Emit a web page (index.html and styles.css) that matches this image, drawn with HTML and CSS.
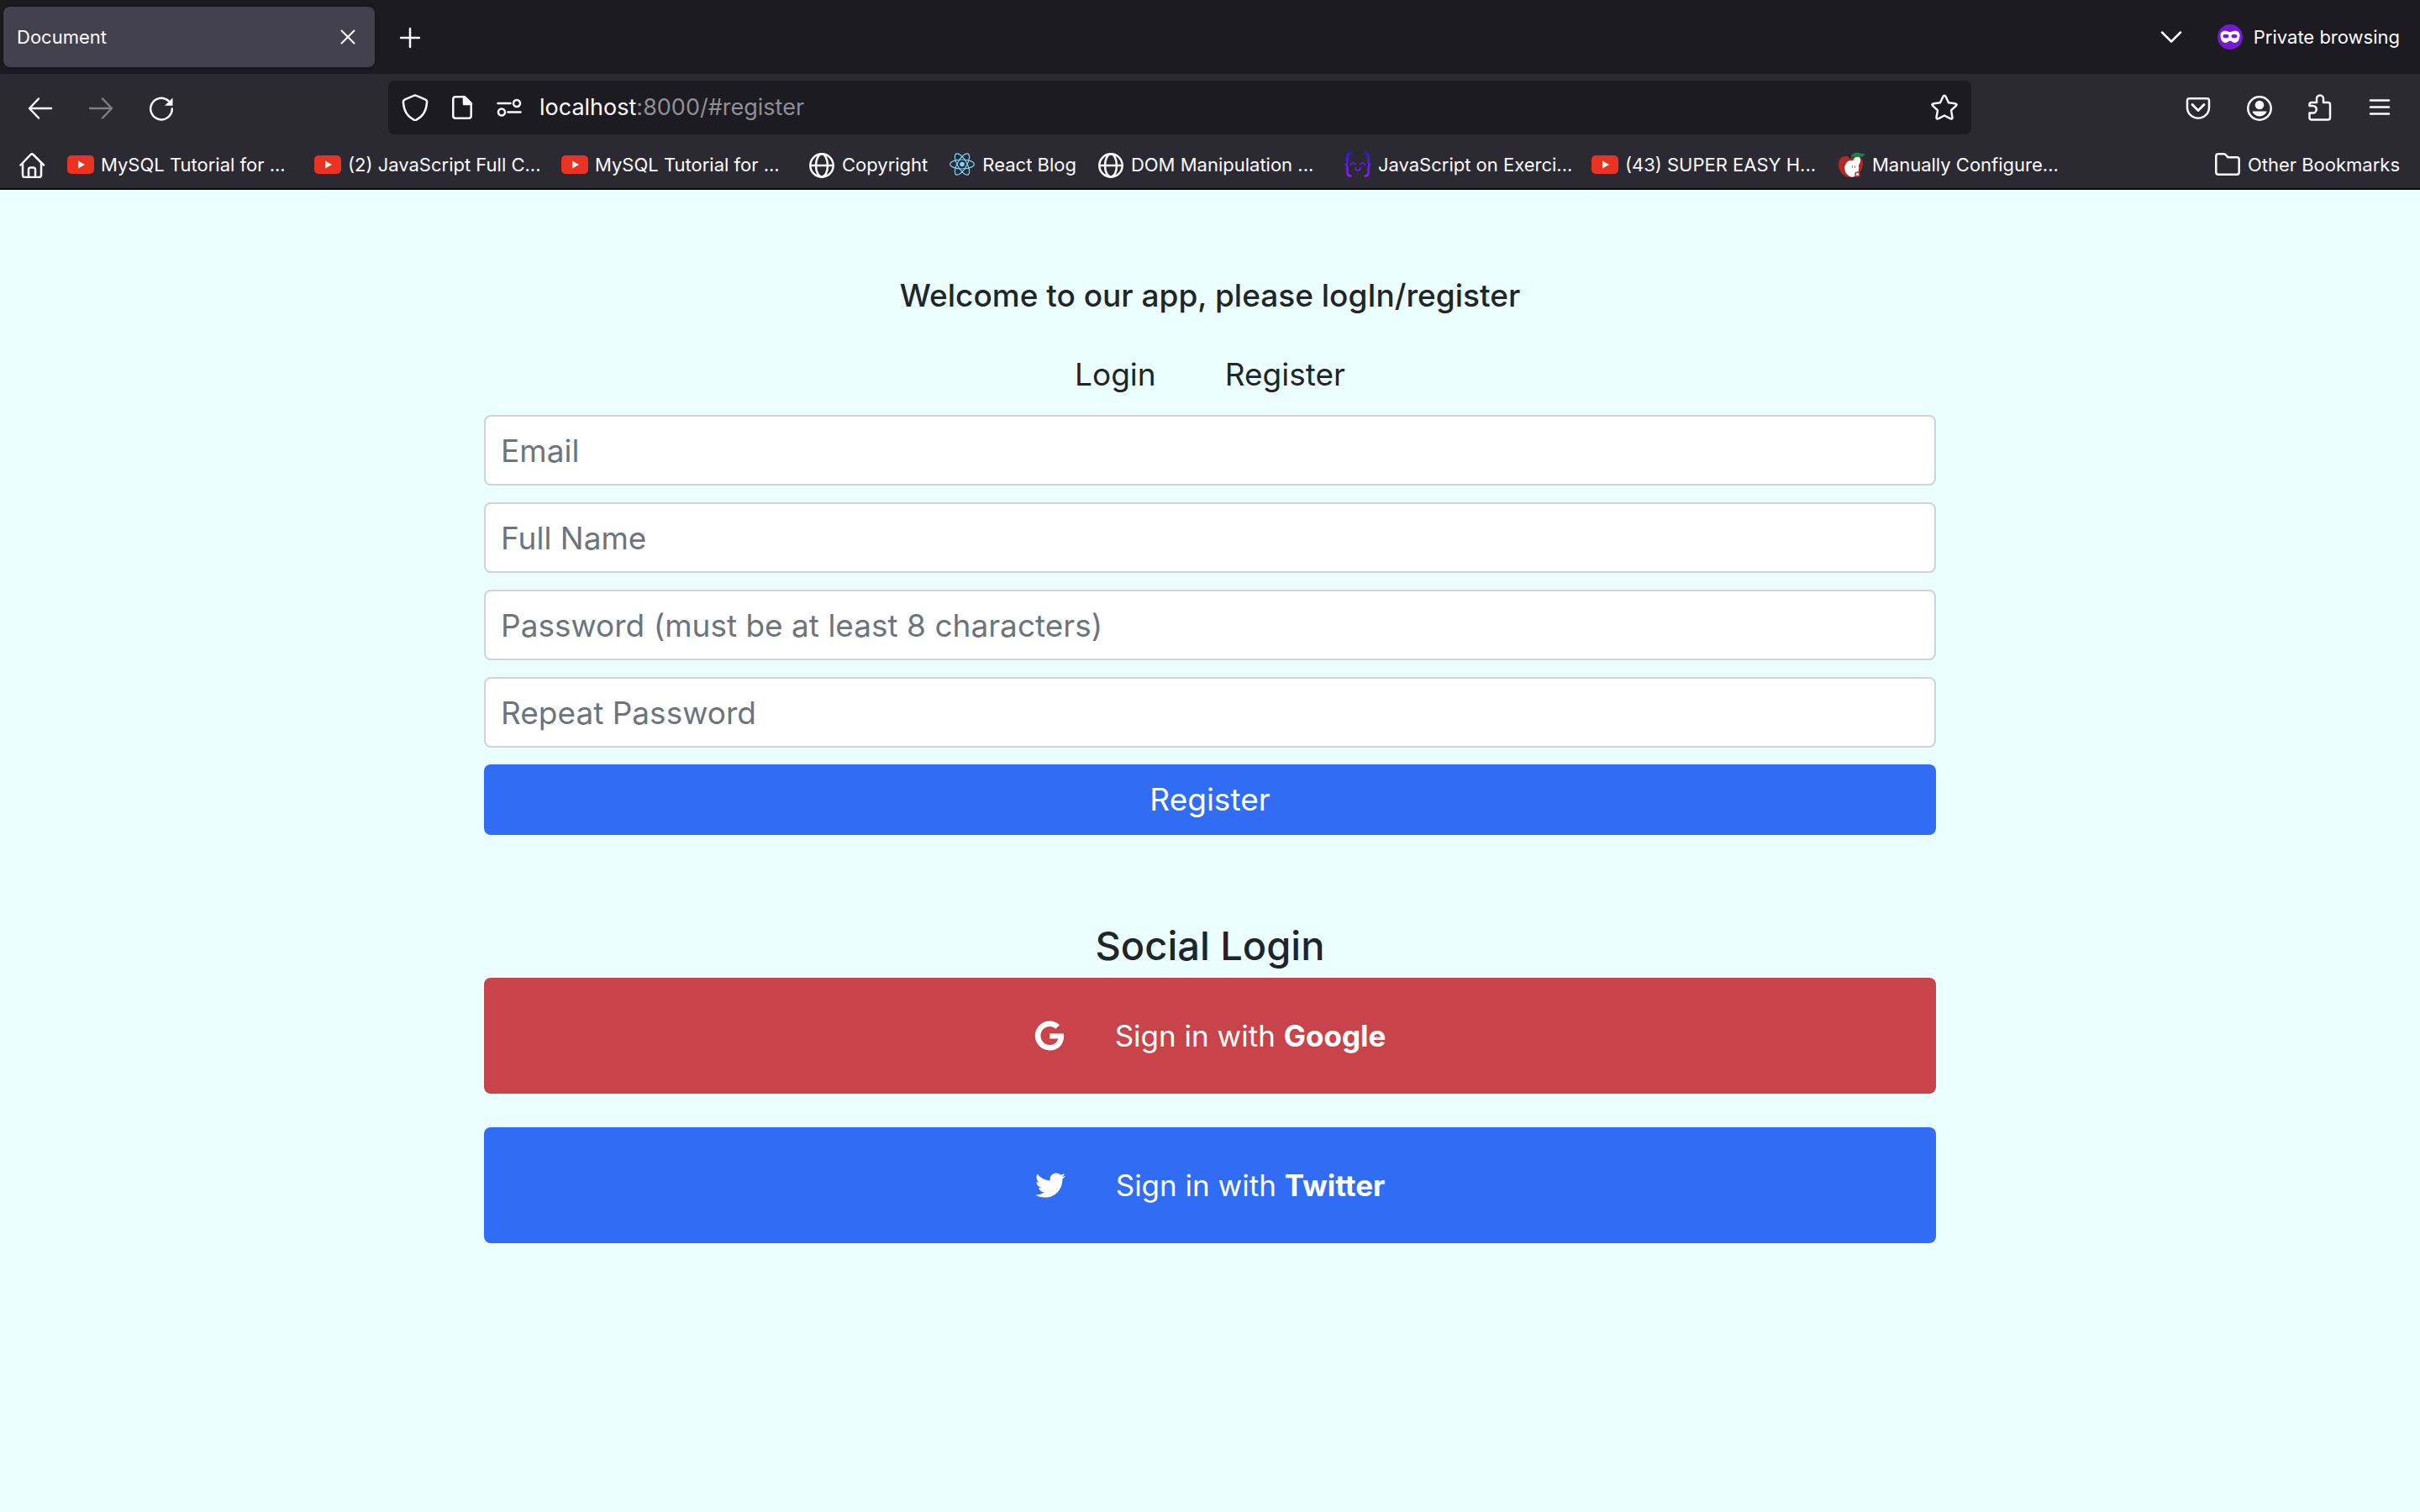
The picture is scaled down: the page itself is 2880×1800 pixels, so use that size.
FILE: index.html
```html
<!DOCTYPE html>
<html lang="en">
<head>
  <meta charset="utf-8">
  <meta name="viewport" content="width=device-width, initial-scale=1">
  <title>Document</title>
  <link rel="stylesheet" href="styles.css">
</head>
<body>
  <svg class="defs" aria-hidden="true">
    <symbol id="youtube" viewBox="0 0 32 32">
      <g stroke="none">
        <rect x="0" y="5" width="32" height="22" rx="5" fill="#ea3323"/>
        <path d="M13 11.500v9l8-4.500z" fill="#fff"/>
      </g>
    </symbol>
    <symbol id="globe" viewBox="0 0 32 32">
      <g fill="none" stroke="currentColor" stroke-width="2.500">
        <circle cx="16" cy="17" r="13.700"/>
        <ellipse cx="16" cy="17" rx="7" ry="13.700"/>
        <path d="M2.500 17h27"/>
      </g>
    </symbol>
  </svg>

  <header class="browser">
    <div class="tabstrip">
      <div class="tab">
        <span class="tab-title">Document</span>
        <button class="tab-close" type="button" aria-label="Close tab">
          <svg class="icon" viewBox="0 0 32 32"><path d="M8.500 8.500l15 15m0-15l-15 15" stroke-width="2"/></svg>
        </button>
      </div>
      <button class="tool" type="button" aria-label="New tab">
        <svg class="icon" viewBox="0 0 32 32"><path d="M16 6v22M5 17h22"/></svg>
      </button>
      <button class="tool list-tabs" type="button" aria-label="List all tabs">
        <svg class="icon" viewBox="0 0 32 32"><path d="M5 10.500l11 11 11-11"/></svg>
      </button>
      <div class="private">
        <svg class="icon" viewBox="0 0 32 32">
          <circle cx="16" cy="16" r="15" fill="#7817d4" stroke="none"/>
          <path d="M4.500 14c0-4 3-5.500 6-5.300 2.500.2 4 1.300 5.500 1.300s3-1.100 5.500-1.300c3-.2 6 1.300 6 5.300 0 5-2.500 9-6.200 9-2.300 0-3.300-2.500-5.300-2.500S13 23 10.700 23C7 23 4.500 19 4.500 14z" fill="#fff" stroke="none"/>
          <ellipse cx="11" cy="15" rx="3.500" ry="2.300" fill="#7817d4" stroke="none"/>
          <ellipse cx="21" cy="15" rx="3.500" ry="2.300" fill="#7817d4" stroke="none"/>
        </svg>
        <span>Private browsing</span>
      </div>
    </div>

    <div class="toolbar">
      <div class="tools">
        <button class="tool" type="button" aria-label="Back">
          <svg class="icon" viewBox="0 0 32 32"><path d="M29 17H3.500M14 5.500L3 17l11 11.500"/></svg>
        </button>
        <button class="tool" type="button" aria-label="Forward" disabled>
          <svg class="icon" viewBox="0 0 32 32"><path d="M3 17h25.500M18 5.500L29 17 18 28.500"/></svg>
        </button>
        <button class="tool" type="button" aria-label="Reload">
          <svg class="icon" viewBox="0 0 32 32"><path d="M24.500 8A12.800 12.800 0 1 0 28.800 17.500"/><path d="M29.500 4.500v9.300h-9.500z" fill="currentColor" stroke="none"/></svg>
        </button>
      </div>
      <div class="urlbar">
        <button class="url-button" type="button" aria-label="Tracking protection">
          <svg class="icon" viewBox="0 0 32 32"><path d="M14.500 1.800q1.500-.7 3 0L28 6.300q2.200.9 2.100 3.200c-.5 9.500-4.500 17-12.600 21.100q-1.500.7-3 0C6.400 26.500 2.400 19 1.900 9.500Q1.800 7.200 4 6.300z"/></svg>
        </button>
        <button class="url-button" type="button" aria-label="Site information">
          <svg class="icon" viewBox="0 0 32 32"><path d="M19 3.300H8Q5.300 3.300 5.300 6v20Q5.300 28.700 8 28.700h16q2.700 0 2.700-2.700V11z"/><path d="M18 3v9h9z" fill="currentColor"/></svg>
        </button>
        <button class="url-button" type="button" aria-label="Permissions">
          <svg class="icon" viewBox="0 0 32 32"><path d="M2.500 11h15M14.500 21.500h15"/><circle cx="25" cy="11" r="4"/><circle cx="7" cy="21.500" r="4"/></svg>
        </button>
        <span class="url" role="textbox" aria-label="Address">localhost<span class="url-rest">:8000/#register</span></span>
        <button class="url-button" type="button" aria-label="Bookmark this page">
          <svg class="icon" viewBox="0 0 32 32"><path d="M14.300 3.200q1.700-3 3.400 0l3.300 7 7.600 1q3.200.6 1 3l-5.600 5.200 1.400 7.800q.4 3.200-2.500 2L16 25.500l-6.900 3.700q-2.900 1.200-2.500-2L8 19.400l-5.600-5.200q-2.200-2.400 1-3l7.600-1z"/></svg>
        </button>
      </div>
      <div class="tools">
        <button class="tool" type="button" aria-label="Save to Pocket">
          <svg class="icon" viewBox="0 0 32 32"><path d="M5.500 5.300h21q2.500 0 2.500 2.500V16a13 12.700 0 0 1-26 0V7.800q0-2.500 2.500-2.500z"/><path d="M9 12.500l7 7 7-7" stroke-width="3"/></svg>
        </button>
        <button class="tool" type="button" aria-label="Account">
          <svg class="icon" viewBox="0 0 32 32"><circle cx="17" cy="17" r="13.700"/><circle cx="17" cy="13" r="5.300" fill="currentColor" stroke="none"/><path d="M9 20.500h16c1.500 0-2 6-8 6s-9.500-6-8-6z" fill="currentColor" stroke="none"/></svg>
        </button>
        <button class="tool" type="button" aria-label="Extensions">
          <svg class="icon" viewBox="0 0 32 32"><path d="M13 10V5.500a4 4 0 0 1 8 0V10h5.500q2.500 0 2.500 2.500V28q0 2.500-2.500 2.500H7Q4.500 30.500 4.500 28v-5.500h4a4 4 0 0 0 0-8.500h-4v-1.500Q4.500 10 7 10z"/></svg>
        </button>
        <button class="tool" type="button" aria-label="Menu">
          <svg class="icon" viewBox="0 0 32 32"><path d="M5 7.500h22M5 15.500h22M5 23.500h22"/></svg>
        </button>
      </div>
    </div>

    <nav class="bookmarks" aria-label="Bookmarks">
      <a class="home" href="#home" aria-label="Home">
        <svg class="icon" viewBox="0 0 32 32"><path d="M2.500 16.500L14.500 4q1.500-1.300 3 0L30 16.500M5 14.500v14Q5 31 7.500 31h17q2.500 0 2.500-2.500v-14M12 30.500V22q0-2.500 2.500-2.500h3q2.500 0 2.500 2.500v8.500"/></svg>
      </a>
      <a class="bookmark bookmark-long" href="#"><svg class="icon"><use href="#youtube"/></svg>MySQL Tutorial for ...</a>
      <a class="bookmark bookmark-long" href="#"><svg class="icon"><use href="#youtube"/></svg>(2) JavaScript Full C...</a>
      <a class="bookmark bookmark-long" href="#"><svg class="icon"><use href="#youtube"/></svg>MySQL Tutorial for ...</a>
      <a class="bookmark" href="#"><svg class="icon"><use href="#globe"/></svg>Copyright</a>
      <a class="bookmark" href="#">
        <svg class="icon react" viewBox="0 0 32 32">
          <circle cx="16" cy="15.500" r="2.800" fill="currentColor" stroke="none"/>
          <ellipse cx="16" cy="15.500" rx="14.300" ry="5.500"/>
          <ellipse cx="16" cy="15.500" rx="14.300" ry="5.500" transform="rotate(60 16 15.500)"/>
          <ellipse cx="16" cy="15.500" rx="14.300" ry="5.500" transform="rotate(120 16 15.500)"/>
        </svg>React Blog</a>
      <a class="bookmark bookmark-long" href="#"><svg class="icon"><use href="#globe"/></svg>DOM Manipulation ...</a>
      <a class="bookmark bookmark-long" href="#">
        <svg class="icon" viewBox="0 0 32 32">
          <defs><linearGradient id="braces" gradientUnits="userSpaceOnUse" x1="0" y1="2" x2="0" y2="30"><stop offset="0" stop-color="#2e15f5"/><stop offset="1" stop-color="#9a1bf5"/></linearGradient></defs>
          <g stroke="url(#braces)" stroke-width="2.500"><path d="M7.500 2.500q-4 0-4 4V12q0 3-2 4 2 1 2 4v5.500q0 4 4 4M24.500 2.500q4 0 4 4V12q0 3 2 4-2 1-2 4v5.500q0 4-4 4"/><path d="M7.500 16q3-4 6 0M18.500 16q3-4 6 0M13 20q0 3 3 3t3-3" stroke-width="1.500"/></g>
        </svg>JavaScript on Exerci...</a>
      <a class="bookmark bookmark-long" href="#"><svg class="icon"><use href="#youtube"/></svg>(43) SUPER EASY H...</a>
      <a class="bookmark bookmark-long" href="#">
        <svg class="icon" viewBox="0 0 32 32">
          <g stroke="none">
            <path d="M15 8C9 4 0 6 0 16c0 8 6 14 12 15 3 0 5 0 8-1 6-4 9-10 9-16 0-5-4-8-8-7z" fill="#b02a26"/>
            <path d="M18 10c1-4 7-5 8-1 1 4-2 6-2 9 1 4-1 10-5 12-4 2-9-1-11-6C6 18 9 12 14 11c2-.5 3.500 1 4-1z" fill="#fff"/>
            <path d="M14 8c1-5 6-7 10-6 3 .8 5 1.500 8 1-2 4-5 4-9 4-4 0-7-1-9 1z" fill="#1f7f4b"/>
            <path d="M11 1l4 7-2 1z" fill="#171a4d"/>
          </g>
          <circle cx="22.500" cy="27.500" r="2.500" fill="#fff" stroke="#c4303a" stroke-width="1.500"/>
          <path d="M16.500 17.500v2M19.500 17.500v2" stroke="#888" stroke-width="1"/>
        </svg>Manually Configure...</a>
      <a class="bookmark bookmark-folder" href="#"><svg class="icon" viewBox="0 0 32 32"><path d="M5 3.300h6.500q1.500 0 2.500 1.200l2.500 2.800H27q2.700 0 2.700 2.700v15q0 2.700-2.700 2.700H5q-2.700 0-2.700-2.700V6Q2.300 3.300 5 3.300z"/></svg>Other Bookmarks</a>
    </nav>
  </header>

  <main class="page">
    <h1 class="welcome">Welcome to our app, please logIn/register</h1>
    <nav class="switch">
      <a href="#login">Login</a>
      <a href="#register">Register</a>
    </nav>
    <form class="form" action="#register">
      <input class="field" type="email" placeholder="Email" aria-label="Email">
      <input class="field" type="text" placeholder="Full Name" aria-label="Full Name">
      <input class="field" type="password" placeholder="Password (must be at least 8 characters)" aria-label="Password">
      <input class="field" type="password" placeholder="Repeat Password" aria-label="Repeat Password">
      <button class="submit" type="submit">Register</button>
    </form>
    <section class="social">
      <h2 class="social-title">Social Login</h2>
      <a class="social-button google" href="#google">
        <svg class="brand" viewBox="0 0 488 512"><path d="M488 261.800C488 403.300 391.100 504 248 504 110.800 504 0 393.200 0 256S110.800 8 248 8c66.800 0 123 24.500 166.300 64.900l-67.500 64.900C258.500 52.600 94.300 116.600 94.300 256c0 86.500 69.100 156.600 153.700 156.600 98.200 0 135-70.400 140.800-106.900H248v-85.300h236.100c2.300 12.700 3.900 24.900 3.900 41.400z"/></svg>
        <span>Sign in with <b>Google</b></span>
      </a>
      <a class="social-button twitter" href="#twitter">
        <svg class="brand" viewBox="0 0 512 512"><path d="M459.370 151.716c.325 4.548.325 9.097.325 13.645 0 138.720-105.583 298.558-298.558 298.558-59.452 0-114.680-17.219-161.137-47.106 8.447.974 16.568 1.299 25.340 1.299 49.055 0 94.213-16.568 130.274-44.832-46.132-.975-84.792-31.188-98.112-72.772 6.498.974 12.995 1.624 19.818 1.624 9.421 0 18.843-1.300 27.614-3.573-48.081-9.747-84.143-51.980-84.143-102.985v-1.299c13.969 7.797 30.214 12.670 47.431 13.319-28.264-18.843-46.781-51.005-46.781-87.391 0-19.492 5.197-37.360 14.294-52.954 51.655 63.675 129.300 105.258 216.365 109.807-1.624-7.797-2.599-15.918-2.599-24.040 0-57.828 46.782-104.934 104.934-104.934 30.213 0 57.502 12.670 76.670 33.137 23.715-4.548 46.456-13.320 66.599-25.340-7.798 24.366-24.366 44.833-46.132 57.827 21.117-2.273 41.584-8.122 60.426-16.243-14.292 20.791-32.161 39.308-52.628 54.253z"/></svg>
        <span>Sign in with <b>Twitter</b></span>
      </a>
    </section>
  </main>
</body>
</html>
```

FILE: styles.css
```css
*,
*::before,
*::after {
  box-sizing: border-box;
}

body {
  margin: 0;
  min-height: 100vh;
  background: #ebffff;
  color: #212529;
  font-family: Inter, "Liberation Sans", sans-serif;
}

a {
  color: inherit;
  text-decoration: none;
}

button {
  margin: 0;
  padding: 0;
  border: 0;
  background: none;
  color: inherit;
  font: inherit;
}

.defs {
  display: none;
}

.icon {
  flex: none;
  width: 32px;
  height: 32px;
  fill: none;
  stroke: currentColor;
  stroke-width: 2.5;
  stroke-linecap: round;
  stroke-linejoin: round;
}

/* Browser chrome */

.browser {
  background: #2b2a33;
  border-bottom: 2px solid #0c0c0d;
  color: #fbfbfe;
  font-size: 22px;
  line-height: 32px;
}

.tabstrip {
  display: flex;
  align-items: center;
  height: 88px;
  padding: 0 24px 0 4px;
  background: #1c1b22;
}

.tab {
  display: flex;
  align-items: center;
  justify-content: space-between;
  width: 442px;
  height: 72px;
  margin-right: 10px;
  padding: 0 16px;
  border-radius: 8px;
  background: #42414d;
  box-shadow: 0 0 4px rgba(0, 0, 0, 0.4);
}

.tab-close,
.tool,
.url-button {
  display: flex;
  align-items: center;
  justify-content: center;
  flex: none;
}

.tool {
  width: 64px;
  height: 64px;
}

.tool:disabled {
  opacity: 0.4;
}

.list-tabs {
  margin-left: auto;
}

.private {
  display: flex;
  align-items: center;
  gap: 12px;
  margin-left: 22px;
}

.toolbar {
  display: flex;
  align-items: center;
  height: 80px;
  padding: 0 16px;
}

.tools {
  display: flex;
  gap: 8px;
}

.urlbar {
  display: flex;
  align-items: center;
  flex: 1;
  height: 64px;
  margin: 0 238px;
  padding: 0 4px;
  border-radius: 8px;
  background: #1c1b22;
}

.url-button {
  width: 56px;
  height: 56px;
}

.url {
  flex: 1;
  padding-left: 8px;
  font-size: 27px;
}

.url-rest {
  color: #8f8f94;
}

.bookmarks {
  display: flex;
  align-items: center;
  height: 56px;
  padding: 0 24px 0 22px;
  white-space: nowrap;
}

.home {
  display: flex;
  margin-right: 26px;
}

.bookmark {
  display: flex;
  align-items: center;
  gap: 8px;
  padding-right: 25px;
}

.bookmark-long {
  flex: none;
  width: 294px;
}

.bookmark-folder {
  margin-left: auto;
  padding-right: 0;
}

.react {
  color: #7fd7fa;
  stroke-width: 1.2;
}

/* Register page */

.page {
  width: 60%;
  margin: 0 auto;
  padding: 102px 0;
  font-size: 37px;
  line-height: 60px;
}

.welcome {
  margin: 0 0 40px;
  font-size: 37px;
  font-weight: 500;
  line-height: 48px;
  text-align: center;
}

.switch {
  display: flex;
  justify-content: center;
  gap: 82px;
  margin-bottom: 18px;
}

.form {
  display: flex;
  flex-direction: column;
  gap: 20px;
}

.field,
.submit {
  width: 100%;
  height: 84px;
  border-radius: 8px;
}

.field {
  padding: 0 18px;
  border: 2px solid #ced4da;
  background: #fff;
  color: inherit;
  font: inherit;
}

.field::placeholder {
  color: #6c757d;
  opacity: 1;
}

.submit {
  background: #316cf4;
  color: #fff;
}

.social {
  display: flex;
  flex-direction: column;
  margin-top: 102px;
}

.social-title {
  margin: 0 0 8px;
  font-size: 47px;
  font-weight: 500;
  line-height: 60px;
  text-align: center;
}

.social-button {
  display: flex;
  align-items: center;
  justify-content: center;
  gap: 60px;
  height: 138px;
  border-radius: 8px;
  color: #fff;
  font-size: 35px;
}

.social-button + .social-button {
  margin-top: 40px;
}

.google {
  background: #c9444a;
}

.twitter {
  background: #316cf4;
}

.brand {
  width: 36px;
  height: 36px;
  fill: currentColor;
}
```
